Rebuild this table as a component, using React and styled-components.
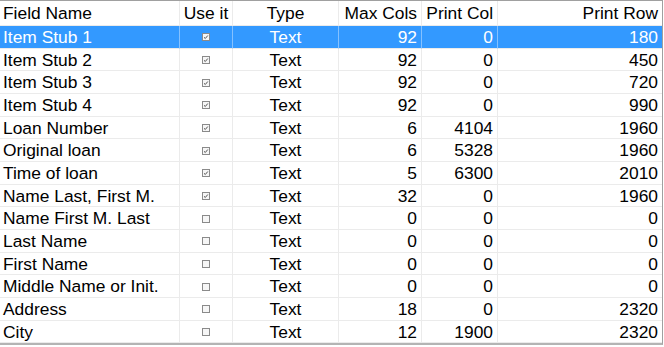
import React from "react";
import styled, { createGlobalStyle } from "styled-components";

const Global = createGlobalStyle`
  html, body { margin: 0; padding: 0; background: #ffffff; }
  body { font-family: "Liberation Sans", Arial, sans-serif; }
`;

const COLS = "180px 53px 106px 83px 76px 164px";

const Grid = styled.div`
  width: 662px;
  border-top: 1px solid #a0a0a0;
  border-right: 1px solid #a0a0a0;
  border-bottom: 2px solid #b4b4b4;
  background: #ffffff;
  font-family: "Liberation Sans", Arial, sans-serif;
  font-size: 17.4px;
  color: #000;
`;

const Row = styled.div`
  display: grid;
  grid-template-columns: ${COLS};
  height: ${(p) => (p.$header ? "25px" : "22.667px")};
  background: ${(p) => (p.$selected ? "#3399ff" : "#ffffff")};
  color: ${(p) => (p.$selected ? "#ffffff" : "#000000")};
`;

const Cell = styled.div`
  box-sizing: border-box;
  display: flex;
  align-items: center;
  justify-content: ${(p) =>
    p.$align === "right" ? "flex-end" : p.$align === "center" ? "center" : "flex-start"};
  padding: ${(p) => (p.$align === "right" ? "2px 4px 0 0" : p.$align === "left" ? "2px 0 0 3px" : "2px 0 0 0")};
  border-right: 1px solid ${(p) => (p.$selected ? "#85c1ff" : "#ebebeb")};
  border-bottom: 1px solid #ebebeb;
  white-space: nowrap;
  overflow: hidden;
  line-height: 1;
  &:last-child { border-right: none; }
`;

const Box = styled.svg`
  display: block;
  width: 8px;
  height: 8px;
  margin-top: -1px;
`;

function Check({ checked }) {
  return (
    <Box viewBox="0 0 8 8">
      <rect x="0.5" y="0.5" width="7" height="7" fill="#f6f6f6" stroke="#8a8a8a" strokeWidth="1" />
      {checked && (
        <polyline points="2,4.3 3.3,5.5 5.8,2.5" fill="none" stroke="#555" strokeWidth="1" />
      )}
    </Box>
  );
}

const columns = [
  { title: "Field Name", align: "left", key: "name" },
  { title: "Use it", align: "center", key: "use" },
  { title: "Type", align: "center", key: "type" },
  { title: "Max Cols", align: "right", key: "max" },
  { title: "Print Col", align: "right", key: "col" },
  { title: "Print Row", align: "right", key: "row" },
];

const data = [
  ["Item Stub 1", true, "Text", 92, 0, 180],
  ["Item Stub 2", true, "Text", 92, 0, 450],
  ["Item Stub 3", true, "Text", 92, 0, 720],
  ["Item Stub 4", true, "Text", 92, 0, 990],
  ["Loan Number", true, "Text", 6, 4104, 1960],
  ["Original loan", true, "Text", 6, 5328, 1960],
  ["Time of loan", true, "Text", 5, 6300, 2010],
  ["Name Last, First M.", true, "Text", 32, 0, 1960],
  ["Name First M. Last", false, "Text", 0, 0, 0],
  ["Last Name", false, "Text", 0, 0, 0],
  ["First Name", false, "Text", 0, 0, 0],
  ["Middle Name or Init.", false, "Text", 0, 0, 0],
  ["Address", false, "Text", 18, 0, 2320],
  ["City", false, "Text", 12, 1900, 2320],
];

export default function App() {
  return (
    <>
      <Global />
      <Grid>
        <Row $header>
          {columns.map((c) => (
            <Cell key={c.key} $align={c.align}>
              {c.title}
            </Cell>
          ))}
        </Row>
        {data.map((r, i) => {
          const sel = i === 0;
          return (
            <Row key={i} $selected={sel}>
              <Cell $align="left" $selected={sel}>{r[0]}</Cell>
              <Cell $align="center" $selected={sel}><Check checked={r[1]} /></Cell>
              <Cell $align="center" $selected={sel}>{r[2]}</Cell>
              <Cell $align="right" $selected={sel}>{r[3]}</Cell>
              <Cell $align="right" $selected={sel}>{r[4]}</Cell>
              <Cell $align="right" $selected={sel}>{r[5]}</Cell>
            </Row>
          );
        })}
      </Grid>
    </>
  );
}
